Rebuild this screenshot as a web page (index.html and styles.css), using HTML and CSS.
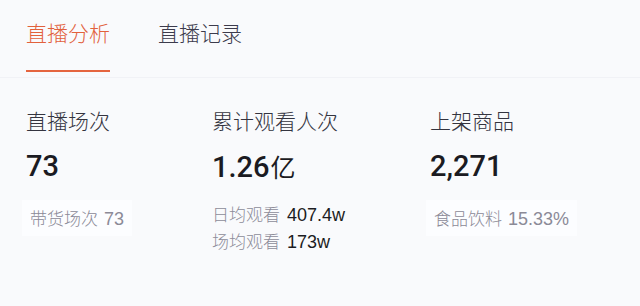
FILE: index.html
```html
<!DOCTYPE html>
<html lang="zh-CN">
<head>
    <meta charset="UTF-8">
    <title>直播分析</title>
    <link rel="stylesheet" href="styles.css">
</head>
<body>
    <div class="panel">
        <div class="tabs">
            <div class="tab active">直播分析</div>
            <div class="tab">直播记录</div>
        </div>
        <div class="stats">
            <div class="stat">
                <div class="stat-label">直播场次</div>
                <div class="stat-value">73</div>
                <div class="chip">带货场次<span class="num">73</span></div>
            </div>
            <div class="stat">
                <div class="stat-label">累计观看人次</div>
                <div class="stat-value">1.26<span class="unit">亿</span></div>
                <div class="sub-list">
                    <div class="sub-row">日均观看<span class="num">407.4w</span></div>
                    <div class="sub-row">场均观看<span class="num">173w</span></div>
                </div>
            </div>
            <div class="stat">
                <div class="stat-label">上架商品</div>
                <div class="stat-value">2,271</div>
                <div class="chip">食品饮料<span class="num">15.33%</span></div>
            </div>
        </div>
    </div>
</body>
</html>
```

FILE: styles.css
```css
body {
    margin: 0;
    background-color: #f9fafc;
    font-family: "Noto Sans CJK SC", sans-serif;
    font-weight: 300;
    color: #33333f;
}
.panel {
    width: 640px;
    height: 306px;
    overflow: hidden;
}
.tabs {
    display: flex;
    gap: 48px;
    padding-left: 26px;
    height: 78px;
    border-bottom: 1px solid #f1f2f6;
    box-sizing: border-box;
}
.tab {
    font-size: 21px;
    line-height: 24px;
    padding-top: 20px;
    height: 50px;
    color: #3c3b4c;
}
.tab.active {
    color: #e2613c;
    border-bottom: 2px solid #e5653f;
}
.stats {
    display: grid;
    grid-template-columns: 186px 218px 1fr;
    padding: 28px 0 0 26px;
}
.stat-label {
    font-size: 21px;
    line-height: 28px;
    color: #34343f;
}
.stat-value {
    margin-top: 14px;
    font-family: Roboto, "Noto Sans CJK SC", sans-serif;
    font-size: 29px;
    font-weight: 500;
    line-height: 36px;
    color: #1b1b22;
}
.stat-value .unit {
    font-family: "Noto Sans CJK SC", sans-serif;
    font-size: 25px;
    font-weight: 400;
    margin-left: 1px;
}
.chip {
    display: inline-block;
    margin: 16px 0 0 -4px;
    padding: 0 8px;
    height: 36px;
    line-height: 36px;
    font-size: 17px;
    color: #8b8a97;
    background-color: #fcfdff;
}
.chip .num {
    font-family: "Liberation Sans", sans-serif;
    font-size: 18px;
    font-weight: 400;
    margin-left: 6px;
}
.sub-list {
    margin-top: 16px;
}
.sub-row {
    font-size: 17px;
    line-height: 25px;
    color: #8d8c99;
}
.sub-row .num {
    font-family: "Liberation Sans", sans-serif;
    font-size: 18px;
    font-weight: 400;
    margin-left: 7px;
    color: #1c1c22;
}
```
